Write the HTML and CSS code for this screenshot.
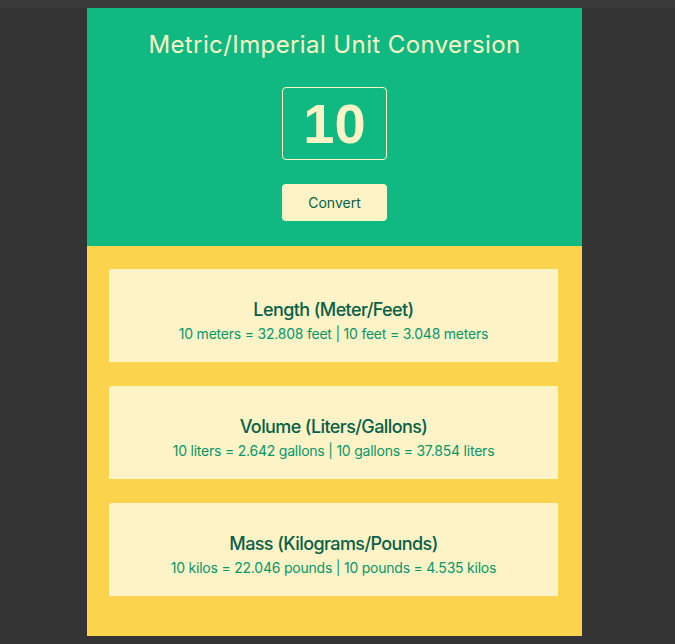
FILE: index.html
```html
<!DOCTYPE html>
<html lang="en">
<head>
<meta charset="utf-8">
<title>Metric/Imperial Unit Conversion</title>
<link rel="stylesheet" href="styles.css">
</head>
<body>
<div class="topbar"></div>
<main class="app">
  <section class="hero">
    <h1 class="title">Metric/Imperial Unit Conversion</h1>
    <input class="number" type="text" value="10">
    <button class="convert" type="button">Convert</button>
  </section>
  <section class="results">
    <div class="card">
      <h2 class="card-title">Length (Meter/Feet)</h2>
      <p class="card-text">10 meters = 32.808 feet | 10 feet = 3.048 meters</p>
    </div>
    <div class="card">
      <h2 class="card-title">Volume (Liters/Gallons)</h2>
      <p class="card-text">10 liters = 2.642 gallons | 10 gallons = 37.854 liters</p>
    </div>
    <div class="card">
      <h2 class="card-title">Mass (Kilograms/Pounds)</h2>
      <p class="card-text">10 kilos = 22.046 pounds | 10 pounds = 4.535 kilos</p>
    </div>
  </section>
</main>
</body>
</html>
```
FILE: styles.css
```css
html {
  background: #353435;
}
body {
  margin: 0;
  font-family: Inter, "Noto Sans", sans-serif;
}
.topbar {
  height: 8px;
  background: #3a3a3a;
}
.app {
  width: 495px;
  margin-left: 87px;
}
.hero {
  background: #10b981;
  padding: 21px 0 25px;
  display: flex;
  flex-direction: column;
  align-items: center;
}
.title {
  margin: 0;
  font-size: 24px;
  line-height: 32px;
  font-weight: 400;
  letter-spacing: 0.4px;
  color: #fef3c7;
}
.number {
  box-sizing: border-box;
  margin-top: 26px;
  width: 105px;
  height: 73px;
  border: 1px solid #fef3c7;
  border-radius: 4px;
  background: transparent;
  color: #fef3c7;
  font-family: "Liberation Sans", Arial, sans-serif;
  font-weight: 700;
  font-size: 56px;
  text-align: center;
  padding: 0;
  outline: none;
}
.convert {
  margin-top: 24px;
  width: 105px;
  height: 37px;
  border: none;
  border-radius: 4px;
  background: #fef3c7;
  color: #065f46;
  font-family: Inter, "Noto Sans", sans-serif;
  font-size: 14px;
  padding: 0;
}
.results {
  background: #fcd34d;
  padding: 23px 24px 40px 22px;
  display: flex;
  flex-direction: column;
  gap: 24px;
}
.card {
  background: #fef3c7;
  border-top-left-radius: 3px;
  padding: 27px 0 18px;
  text-align: center;
}
.card-title {
  margin: 0;
  font-size: 18px;
  line-height: 28px;
  font-weight: 500;
  letter-spacing: -0.6px;
  color: #065f46;
}
.card-text {
  margin: 0;
  font-size: 14px;
  line-height: 20px;
  letter-spacing: -0.22px;
  color: #059669;
}
```
